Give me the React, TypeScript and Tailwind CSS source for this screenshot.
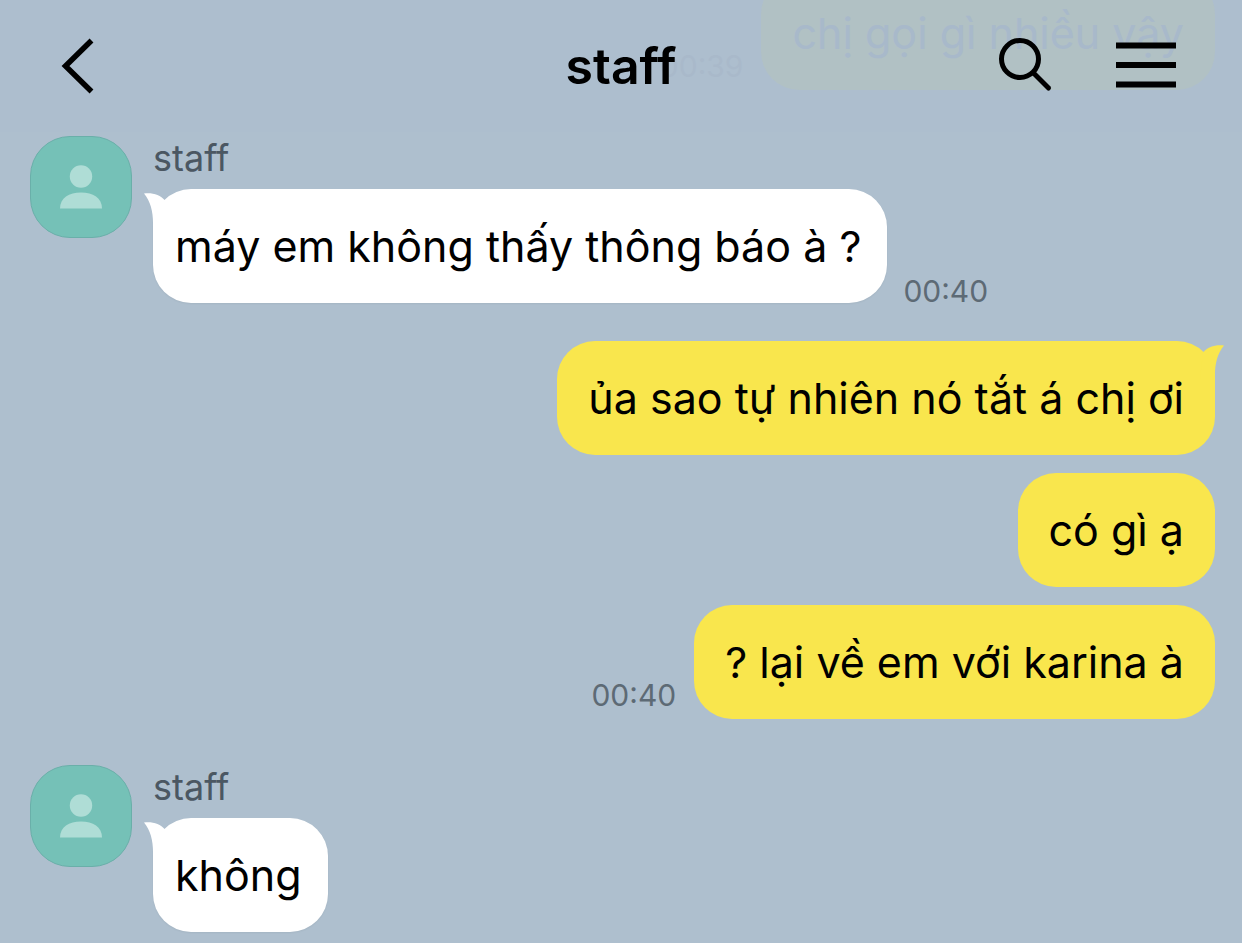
import React from 'react';
import clsx from 'clsx';

interface Message {
  id: number;
  text: string;
  time?: string;
  faded?: boolean;
}

interface MessageGroup {
  id: number;
  sender: 'me' | 'staff';
  tail?: boolean;
  messages: Message[];
}

const GROUPS: MessageGroup[] = [
  {
    id: 1,
    sender: 'me',
    messages: [{ id: 1, text: 'chị gọi gì nhiều vậy', time: '00:39', faded: true }],
  },
  {
    id: 2,
    sender: 'staff',
    tail: true,
    messages: [{ id: 2, text: 'máy em không thấy thông báo à ?', time: '00:40' }],
  },
  {
    id: 3,
    sender: 'me',
    tail: true,
    messages: [
      { id: 3, text: 'ủa sao tự nhiên nó tắt á chị ơi' },
      { id: 4, text: 'có gì ạ' },
      { id: 5, text: '? lại về em với karina à', time: '00:40' },
    ],
  },
  {
    id: 4,
    sender: 'staff',
    tail: true,
    messages: [{ id: 6, text: 'không' }],
  },
];

const Header: React.FC = () => (
  <header className="absolute inset-x-0 top-0 z-10 grid h-[132px] grid-cols-[1fr_auto_1fr] items-center bg-[#abbbd1]/25 px-[60px] text-black">
    <button type="button" aria-label="Back" className="justify-self-start">
      <svg width="36" height="56" viewBox="0 0 36 56" fill="none" stroke="currentColor" strokeWidth="5.5">
        <path d="M31.500 2.500 L5.500 28 L31.500 53.500" />
      </svg>
    </button>
    <h1 className="text-[50px] leading-[60px] font-semibold">staff</h1>
    <div className="flex items-center gap-14 justify-self-end">
      <button type="button" aria-label="Search">
        <svg width="56" height="56" viewBox="0 0 56 56" fill="none" stroke="currentColor" strokeWidth="5">
          <circle cx="22" cy="21" r="18.5" />
          <path d="M35.5 35 L50.5 50" strokeLinecap="round" />
        </svg>
      </button>
      <button type="button" aria-label="Menu">
        <svg width="72" height="56" viewBox="0 0 72 56" fill="none" stroke="currentColor" strokeWidth="6">
          <path d="M6 7.5H66M6 27H66M6 46.5H66" />
        </svg>
      </button>
    </div>
  </header>
);

const Avatar: React.FC = () => (
  <div className="flex size-[102px] shrink-0 items-center justify-center rounded-[40px] border border-[#6aafa9] bg-[#75c1b7]">
    <svg width="44" height="46" viewBox="0 0 44 46" fill="#afddd6">
      <circle cx="22" cy="12.5" r="11.2" />
      <path d="M1 44.5 C1 34 10 28.5 22 28.5 C34 28.5 43 34 43 44.5 Z" />
    </svg>
  </div>
);

const Tail: React.FC<{ mine: boolean }> = ({ mine }) => (
  <svg
    width="24"
    height="34"
    viewBox="0 0 24 34"
    className={clsx('absolute top-1', mine ? '-right-[9px] -scale-x-100 text-[#f9e64d]' : '-left-[9px] text-white')}
    fill="currentColor"
  >
    <path d="M0 0.5 C9 -0.5 16 2 21 7.5 L24 34 L9 34 C9.5 20 7 9 0 0.5 Z" />
  </svg>
);

const Bubble: React.FC<{ message: Message; mine: boolean; tail: boolean }> = ({ message, mine, tail }) => (
  <div className={clsx('flex items-end', mine ? 'flex-row-reverse gap-[18px]' : 'gap-4')}>
    <p
      className={clsx(
        'relative rounded-[38px] py-7 text-[43px] leading-[58px]',
        mine ? 'px-[31px]' : 'pr-[26px] pl-[22px]',
        message.faded && 'bg-[#b3c3c1] text-[#a7b8c9]',
        !message.faded && (mine ? 'bg-[#f9e64d] text-black' : 'bg-white text-black shadow-xs'),
      )}
    >
      {tail && <Tail mine={mine} />}
      {message.text}
    </p>
    {message.time && (
      <time
        className={clsx(
          'text-[30px] leading-6',
          mine && 'pb-3',
          message.faded ? 'text-[#a8b9c9]' : 'text-[#5d6a75]',
        )}
      >
        {message.time}
      </time>
    )}
  </div>
);

const Group: React.FC<{ group: MessageGroup }> = ({ group }) => {
  const mine = group.sender === 'me';

  return (
    <section className={clsx('flex gap-[21px]', mine ? 'justify-end' : 'pt-2')}>
      {!mine && <Avatar />}
      <div>
        {!mine && <h2 className="pb-2 text-[36px] leading-[45px] text-[#4b5762]">staff</h2>}
        <div className="flex flex-col gap-[18px]">
          {group.messages.map((message, i) => (
            <Bubble key={message.id} message={message} mine={mine} tail={!!group.tail && i === 0} />
          ))}
        </div>
      </div>
    </section>
  );
};

const App: React.FC = () => (
  <div className="relative min-h-screen overflow-hidden bg-[#aebfce] font-['Inter','Noto_Sans',sans-serif]">
    <Header />
    {/* The oldest message is partly scrolled out under the header */}
    <main className="-mt-6 flex flex-col gap-[38px] pr-[27px] pb-3 pl-[30px]">
      {GROUPS.map((group) => (
        <Group key={group.id} group={group} />
      ))}
    </main>
  </div>
);

export default App;
